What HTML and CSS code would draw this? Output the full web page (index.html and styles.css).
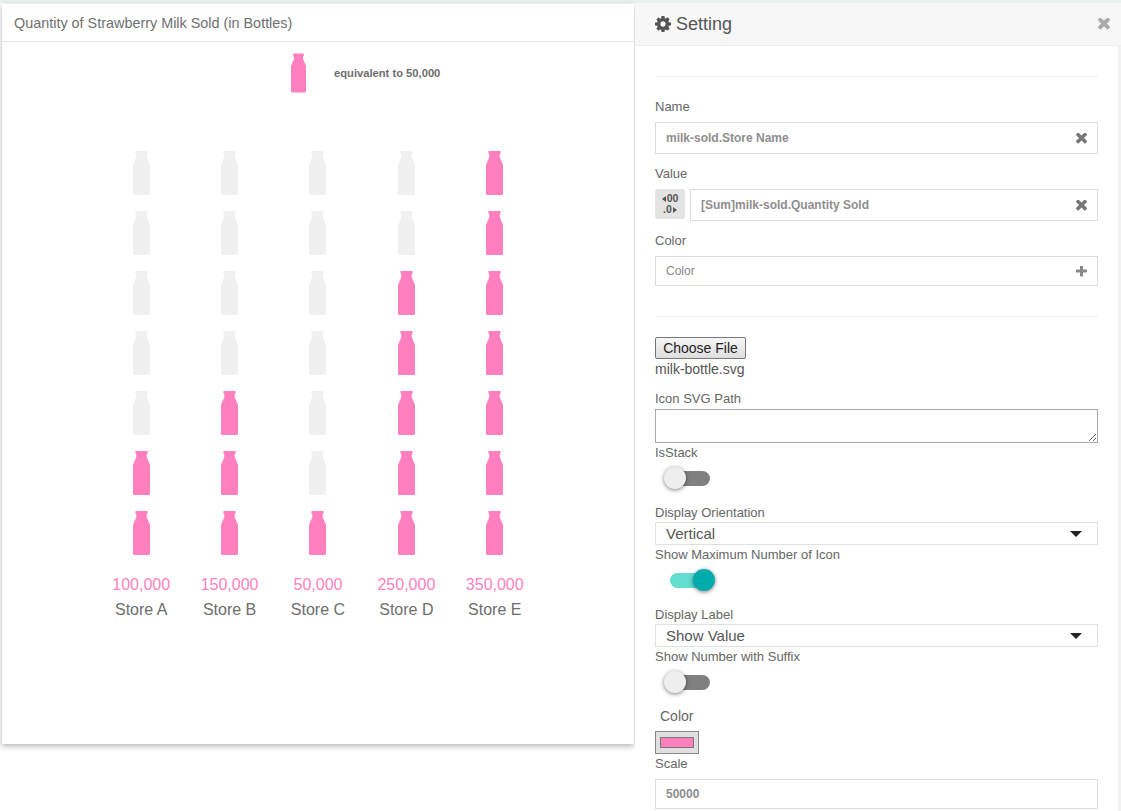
FILE: index.html
```html
<!DOCTYPE html>
<html>
<head>
	<meta http-equiv="Content-Type" content="text/html;charset=UTF-8">
	<title>Quantity of Strawberry Milk Sold</title>
	<link rel="stylesheet" href="styles.css">
</head>
<body>
	<svg class="defs" width="0" height="0">
		<symbol id="bottle" viewBox="0 0 17 44">
			<path d="M2.5 0h12v2.500l-.8 1v2.500l3.300 8v28.500a1.500 1.500 0 0 1-1.500 1.500h-14a1.500 1.500 0 0 1-1.500-1.500v-28.500l3.300-8v-2.500l-.8-1z"/>
		</symbol>
		<symbol id="times" viewBox="110 302 1188 1188">
			<path d="M1298 1214q0 40-28 68l-136 136q-28 28-68 28t-68-28l-294-294-294 294q-28 28-68 28t-68-28l-136-136q-28-28-28-68t28-68l294-294-294-294q-28-28-28-68t28-68l136-136q28-28 68-28t68 28l294 294 294-294q28-28 68-28t68 28l136 136q28 28 28 68t-28 68l-294 294 294 294q28 28 28 68z"/>
		</symbol>
	</svg>

	<div class="page">
		<!-- chart card -->
		<div class="card">
			<div class="card-title">Quantity of Strawberry Milk Sold (in Bottles)</div>
			<div class="legend">
				<svg class="legend-icon"><use href="#bottle"/></svg>
				<span class="legend-text">equivalent to 50,000</span>
			</div>
			<div class="chart">
				<div class="col">
					<svg class="bottle"><use href="#bottle"/></svg>
					<svg class="bottle"><use href="#bottle"/></svg>
					<svg class="bottle"><use href="#bottle"/></svg>
					<svg class="bottle"><use href="#bottle"/></svg>
					<svg class="bottle"><use href="#bottle"/></svg>
					<svg class="bottle on"><use href="#bottle"/></svg>
					<svg class="bottle on"><use href="#bottle"/></svg>
					<div class="val">100,000</div>
					<div class="store">Store A</div>
				</div>
				<div class="col">
					<svg class="bottle"><use href="#bottle"/></svg>
					<svg class="bottle"><use href="#bottle"/></svg>
					<svg class="bottle"><use href="#bottle"/></svg>
					<svg class="bottle"><use href="#bottle"/></svg>
					<svg class="bottle on"><use href="#bottle"/></svg>
					<svg class="bottle on"><use href="#bottle"/></svg>
					<svg class="bottle on"><use href="#bottle"/></svg>
					<div class="val">150,000</div>
					<div class="store">Store B</div>
				</div>
				<div class="col">
					<svg class="bottle"><use href="#bottle"/></svg>
					<svg class="bottle"><use href="#bottle"/></svg>
					<svg class="bottle"><use href="#bottle"/></svg>
					<svg class="bottle"><use href="#bottle"/></svg>
					<svg class="bottle"><use href="#bottle"/></svg>
					<svg class="bottle"><use href="#bottle"/></svg>
					<svg class="bottle on"><use href="#bottle"/></svg>
					<div class="val">50,000</div>
					<div class="store">Store C</div>
				</div>
				<div class="col">
					<svg class="bottle"><use href="#bottle"/></svg>
					<svg class="bottle"><use href="#bottle"/></svg>
					<svg class="bottle on"><use href="#bottle"/></svg>
					<svg class="bottle on"><use href="#bottle"/></svg>
					<svg class="bottle on"><use href="#bottle"/></svg>
					<svg class="bottle on"><use href="#bottle"/></svg>
					<svg class="bottle on"><use href="#bottle"/></svg>
					<div class="val">250,000</div>
					<div class="store">Store D</div>
				</div>
				<div class="col">
					<svg class="bottle on"><use href="#bottle"/></svg>
					<svg class="bottle on"><use href="#bottle"/></svg>
					<svg class="bottle on"><use href="#bottle"/></svg>
					<svg class="bottle on"><use href="#bottle"/></svg>
					<svg class="bottle on"><use href="#bottle"/></svg>
					<svg class="bottle on"><use href="#bottle"/></svg>
					<svg class="bottle on"><use href="#bottle"/></svg>
					<div class="val">350,000</div>
					<div class="store">Store E</div>
				</div>
			</div>
		</div>

		<!-- settings panel -->
		<div class="panel">
			<div class="panel-head">
				<svg class="gear" viewBox="0 -128 1536 1536"><path d="M1024 640q0-106-75-181t-181-75-181 75-75 181 75 181 181 75 181-75 75-181zm512-109v222q0 12-8 23t-20 13l-185 28q-19 54-39 91 35 50 107 138 10 12 10 25t-9 23q-27 37-99 108t-94 71q-12 0-26-9l-138-108q-44 23-91 38-16 136-29 186-7 28-36 28h-222q-14 0-24.500-8.500t-11.500-21.500l-28-184q-49-16-90-37l-141 107q-10 9-25 9-14 0-25-11-126-114-165-168-7-10-7-23 0-12 8-23 15-21 51-66.500t54-70.500q-27-50-41-99l-183-27q-13-2-21-12.500t-8-23.500v-222q0-12 8-23t19-13l186-28q14-46 39-92-40-57-107-138-10-12-10-24 0-10 9-23 26-36 98.500-107.500t94.500-71.500q13 0 26 10l138 107q44-23 91-38 16-136 29-186 7-28 36-28h222q14 0 24.500 8.500t11.500 21.500l28 184q49 16 90 37l142-107q9-9 24-9 13 0 25 10 129 119 165 170 7 8 7 22 0 12-8 23-15 21-51 66.500t-54 70.500q26 50 41 98l183 28q13 2 21 12.500t8 23.500z"/></svg>
				<span class="panel-title">Setting</span>
				<svg class="head-close"><use href="#times"/></svg>
			</div>
			<div class="panel-body">
				<div class="rule rule-top"></div>

				<div class="label label-name">Name</div>
				<div class="field">
					<span class="field-text">milk-sold.Store Name</span>
					<svg class="field-x"><use href="#times"/></svg>
				</div>

				<div class="label label-field">Value</div>
				<div class="value-row">
					<div class="num-btn">
						<span class="num-line"><i class="arrow-left"></i>00</span>
						<span class="num-line">.0<i class="arrow-right"></i></span>
					</div>
					<div class="field">
						<span class="field-text">[Sum]milk-sold.Quantity Sold</span>
						<svg class="field-x"><use href="#times"/></svg>
					</div>
				</div>

				<div class="label label-field">Color</div>
				<div class="field field-color">
					<span class="field-hint">Color</span>
					<svg class="field-plus" viewBox="192 192 1408 1408"><path d="M1600 736v192q0 40-28 68t-68 28h-416v416q0 40-28 68t-68 28h-192q-40 0-68-28t-28-68v-416h-416q-40 0-68-28t-28-68v-192q0-40 28-68t68-28h416v-416q0-40 28-68t68-28h192q40 0 68 28t28 68v416h416q40 0 68 28t28 68z"/></svg>
				</div>

				<div class="rule rule-mid"></div>

				<button class="file-btn" type="button">Choose File</button>
				<div class="file-name">milk-bottle.svg</div>

				<div class="label label-path">Icon SVG Path</div>
				<textarea class="path-box"></textarea>

				<div class="label label-tight">IsStack</div>
				<div class="toggle"><span class="track"></span><span class="knob"></span></div>

				<div class="label label-group">Display Orientation</div>
				<div class="select"><span>Vertical</span><i class="caret"></i></div>

				<div class="label label-tight">Show Maximum Number of Icon</div>
				<div class="toggle toggle-on"><span class="track"></span><span class="knob"></span></div>

				<div class="label label-group">Display Label</div>
				<div class="select"><span>Show Value</span><i class="caret"></i></div>

				<div class="label label-tight">Show Number with Suffix</div>
				<div class="toggle"><span class="track"></span><span class="knob"></span></div>

				<div class="label label-color">Color</div>
				<div class="swatch"><span class="swatch-fill"></span></div>

				<div class="label label-tight">Scale</div>
				<div class="field field-scale">
					<span class="field-text">50000</span>
				</div>
			</div>
		</div>
	</div>
</body>
</html>
```

FILE: styles.css
```css
*{ margin: 0; padding: 0; box-sizing: border-box; }
html,body{ height: 100%; overflow: hidden; }
body{ background: #fff; font-family: "Liberation Sans", Arial, sans-serif; color: #666; }
.defs{ position: absolute; }

.page{ display: flex; height: 811px; padding-top: 3px; background: linear-gradient(#ecf0f1 3px, #fff 3px); }

/* chart card */
.card{ width: 632px; height: 740px; margin: 1px 0 0 2px; background: #fff; box-shadow: 0 2px 6px rgba(0,0,0,.3); }
.card-title{ height: 38px; line-height: 38px; padding-left: 12px; font-size: 14.400px; color: #707070; border-bottom: 1px solid #e6e6e6; }
.legend{ display: flex; align-items: center; height: 40px; margin-top: 11px; padding-left: 289px; }
.legend-icon{ width: 15px; height: 40px; fill: #ff7fbf; }
.legend-text{ margin-left: 28px; font-size: 11.200px; font-weight: bold; color: #6e6e6e; }

.chart{ display: flex; margin-top: 58px; padding-left: 95px; }
.col{ display: flex; flex-direction: column; align-items: center; width: 88.400px; }
.bottle{ width: 17px; height: 44px; margin-bottom: 16px; fill: #f0f0f0; flex: none; }
.bottle.on{ fill: #ff7fbf; }
.val{ margin-top: 4px; font-size: 16px; line-height: 20px; color: #ff7fbf; }
.store{ margin-top: 5px; font-size: 16px; line-height: 20px; color: #6e6e6e; }

/* settings panel */
.panel{ width: 486px; margin-left: 1px; background: #fff; border-right: 3px solid #f2f2f2; }
.panel-head{ display: flex; align-items: center; height: 43px; margin-right: -3px; padding: 0 11px 0 20px; background: #f7f7f7; border-bottom: 1px solid #eee; }
.gear{ width: 16px; height: 16px; fill: #555; }
.panel-title{ margin-left: 5px; font-size: 18px; color: #555; }
.head-close{ width: 12px; height: 12px; margin-left: auto; fill: #aaa; }
.panel-body{ padding: 30px 20px 0 20px; }

.rule{ height: 1px; background: #eee; }
.label{ font-size: 13px; line-height: 15px; color: #666; }
.label-name{ margin-top: 22px; margin-bottom: 8px; }
.label-field{ margin-top: 12px; margin-bottom: 8px; }
.label-path{ margin-top: 13px; margin-bottom: 3px; }
.label-tight{ margin-top: 2px; }
.label-group{ margin-top: 16px; margin-bottom: 2px; }
.label-color{ margin-top: 16px; margin-bottom: 7px; padding-left: 5px; font-size: 14px; }

.field{ display: flex; align-items: center; flex: 1; height: 32px; padding: 0 10px; background: #fff; border: 1px solid #ddd; }
.field-text{ font-size: 12px; font-weight: bold; color: #8e8e8e; }
.field-x{ width: 11px; height: 11px; margin-left: auto; fill: #777; }
.value-row{ display: flex; gap: 5px; }
.num-btn{ display: flex; flex-direction: column; align-items: center; justify-content: center; width: 30px; height: 30px; background: #e3e3e3; border-radius: 3px; font-size: 10.500px; line-height: 11px; font-weight: bold; color: #555; }
.num-line{ display: flex; align-items: center; gap: 1px; }
.arrow-left{ border-top: 3px solid transparent; border-bottom: 3px solid transparent; border-right: 4px solid #555; }
.arrow-right{ border-top: 3px solid transparent; border-bottom: 3px solid transparent; border-left: 4px solid #555; }
.field-color{ height: 30px; }
.field-hint{ font-size: 12px; color: #888; }
.field-plus{ width: 11px; height: 11px; margin-left: auto; fill: #888; }
.rule-mid{ margin-top: 30px; margin-bottom: 20px; }

.file-btn{ display: block; width: 91px; height: 22px; font-family: "Liberation Sans", Arial, sans-serif; font-size: 14px; color: #222; background: linear-gradient(#f6f6f6, #dedede); border: 1px solid #777; border-radius: 2px; }
.file-name{ margin-top: 1px; font-size: 14px; line-height: 18px; color: #555; }
.path-box{ display: block; width: 443px; height: 34px; border: 1px solid #a9a9a9; background: #fff; }

.toggle{ position: relative; height: 22px; margin-top: 7px; }
.track{ display: block; position: absolute; left: 15px; top: 3.500px; width: 40px; height: 15px; border-radius: 8px; background: #808080; }
.knob{ position: absolute; left: 9px; top: 0; width: 22px; height: 22px; border-radius: 50%; background: #eee; box-shadow: 0 1px 4px rgba(0,0,0,.5); }
.toggle-on .track{ background: #62ddd0; }
.toggle-on .knob{ left: 38px; background: #00abab; }

.select{ display: flex; align-items: center; justify-content: space-between; height: 23px; padding: 0 15px 0 10px; border: 1px solid #dde2e8; font-size: 15px; color: #555; }
.caret{ width: 0; height: 0; border-left: 6px solid transparent; border-right: 6px solid transparent; border-top: 6px solid #222; }

.swatch{ display: flex; align-items: center; justify-content: center; width: 44px; height: 23px; background: #e0e0e0; border: 1px solid #888; }
.swatch-fill{ width: 34px; height: 11px; background: #ff7fbf; border: 1px solid #777; }
.field-scale{ height: 30px; margin-top: 8px; }
```
